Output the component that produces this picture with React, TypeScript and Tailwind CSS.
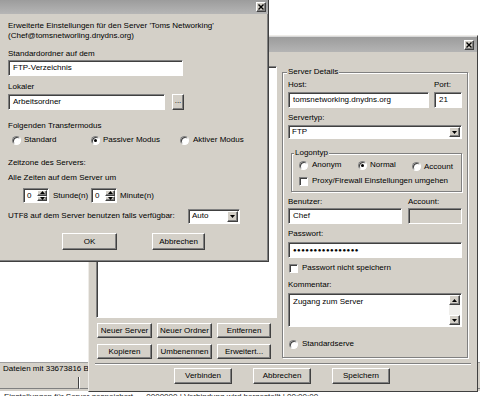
import React from 'react';

const raised =
  'bg-[#d4d0c8] border border-t-white border-l-white border-r-[#404040] border-b-[#404040] shadow-[inset_-1px_-1px_0_#808080]';
const sunken =
  'border border-t-[#808080] border-l-[#808080] border-r-white border-b-white shadow-[inset_1px_1px_0_#404040]';

function CloseBox() {
  return (
    <div className={`flex h-[10px] w-[10px] items-center justify-center ${raised}`}>
      <svg width="6" height="6" viewBox="0 0 6 6">
        <path d="M0.5 0.5 L5.5 5.5 M5.5 0.5 L0.5 5.5" stroke="#000" strokeWidth="1.4" />
      </svg>
    </div>
  );
}

function Button({ label, className = '' }: { label: string; className?: string }) {
  return <div className={`flex items-center justify-center whitespace-nowrap ${raised} ${className}`}>{label}</div>;
}

function Input({ value, className = '', disabled }: { value?: string; className?: string; disabled?: boolean }) {
  return (
    <div className={`flex items-center overflow-hidden whitespace-nowrap pl-[4px] ${sunken} ${disabled ? 'bg-[#d4d0c8]' : 'bg-white'} ${className}`}>
      {value}
    </div>
  );
}

function Radio({ checked }: { checked?: boolean }) {
  return (
    <span className={`flex h-[9px] w-[9px] shrink-0 items-center justify-center rounded-full bg-white ${sunken}`}>
      {checked && <span className="h-[3px] w-[3px] rounded-full bg-black" />}
    </span>
  );
}

function Check() {
  return <span className={`h-[9px] w-[9px] shrink-0 bg-white ${sunken}`} />;
}

function Arrow({ up }: { up?: boolean }) {
  return (
    <svg width="5" height="3" viewBox="0 0 5 3">
      <path d={up ? 'M2.5 0 L5 3 L0 3 Z' : 'M0 0 L5 0 L2.5 3 Z'} fill="#000" />
    </svg>
  );
}

function Select({ value, className = '' }: { value: string; className?: string }) {
  return (
    <div className={`flex items-stretch bg-white ${sunken} ${className}`}>
      <span className="flex flex-1 items-center pl-[3px]">{value}</span>
      <span className={`m-[1px] flex w-[11px] items-center justify-center ${raised}`}>
        <Arrow />
      </span>
    </div>
  );
}

function Spinner() {
  return (
    <div className={`flex h-[15px] w-[26px] items-stretch bg-white ${sunken}`}>
      <span className="flex flex-1 items-center pl-[3px]">0</span>
      <span className="m-[1px] flex w-[10px] flex-col">
        <span className={`flex flex-1 items-center justify-center ${raised}`}>
          <Arrow up />
        </span>
        <span className={`flex flex-1 items-center justify-center ${raised}`}>
          <Arrow />
        </span>
      </span>
    </div>
  );
}

function Backdrop() {
  return (
    <div className="absolute inset-0 flex flex-col">
      <div className="h-[362px] bg-white" />
      <div className="flex h-[13px] items-center border-t border-[#a0a0a0] bg-[#d4d0c8] pl-[3px] whitespace-nowrap">
        Dateien mit 33673816 Bytes
      </div>
      <div className="flex h-[16px] bg-[#d4d0c8] pt-[2px] pb-[2px]">
        <div className="w-[79px] border-r border-[#404040] border-b border-b-[#808080]" />
        <div className="flex-1 border-l border-white border-b border-b-[#808080]" />
      </div>
      <div className="flex-1 overflow-hidden bg-white pl-[4px] pt-[1px] whitespace-nowrap text-[#222]">
        Einstellungen für Server gespeichert&nbsp;&nbsp;&nbsp;&nbsp;&nbsp; 0000000 | Verbindung wird hergestellt | 00:00:00
      </div>
    </div>
  );
}

function SiteManager() {
  return (
    <div className="absolute left-[88px] top-[35px] flex h-[357px] w-[390px] flex-col border border-t-[#eeece8] border-l-[#eeece8] border-r-[#404040] border-b-[#404040] bg-[#d4d0c8]">
      <div className="flex h-[16px] shrink-0 items-center justify-end border-t border-[#d8d8d8] bg-gradient-to-b from-[#9c9c9c] to-[#b4b4b4] pr-[3px]">
        <CloseBox />
      </div>
      <div className="flex flex-1 flex-col">
        <div className="flex items-start pl-[7px]">
          <div className="mt-[14px] flex w-[181px] flex-col">
            <div className={`h-[252px] bg-white ${sunken}`} />
            <div className="mt-[5px] grid grid-cols-[55px_55px_54px] gap-x-[5px] gap-y-[6px] pl-[1px]">
              <Button label="Neuer Server" className="h-[15px]" />
              <Button label="Neuer Ordner" className="h-[15px]" />
              <Button label="Entfernen" className="h-[15px]" />
              <Button label="Kopieren" className="h-[15px]" />
              <Button label="Umbenennen" className="h-[15px]" />
              <Button label="Erweitert..." className="h-[15px]" />
            </div>
          </div>
          <div className="relative ml-[5px] mt-[20px] flex h-[286px] w-[186px] flex-col border border-[#808080] pl-[5px] pr-[5px] shadow-[1px_1px_0_white,inset_1px_1px_0_white]">
            <span className="absolute left-[4px] top-[-6px] bg-[#d4d0c8] px-[1px]">Server Details</span>
            <div className="mt-[7px] flex h-[10px] items-center">
              <span className="w-[146px]">Host:</span>
              <span>Port:</span>
            </div>
            <div className="mt-[2px] flex gap-[5px]">
              <Input value="tomsnetworking.dnydns.org" className="h-[16px] w-[141px]" />
              <Input value="21" className="h-[16px] flex-1" />
            </div>
            <div className="mt-[5px] flex h-[10px] items-center">Servertyp:</div>
            <Select value="FTP" className="mt-[2px] h-[14px]" />
            <div className="relative ml-[3px] mt-[14px] flex h-[39px] flex-col border border-[#808080] pl-[7px] shadow-[1px_1px_0_white,inset_1px_1px_0_white]">
              <span className="absolute left-[2px] top-[-6px] bg-[#d4d0c8] px-[1px]">Logontyp</span>
              <div className="mt-[6px] flex h-[10px] items-center">
                <span className="flex w-[59px] items-center gap-[4px]">
                  <Radio /> Anonym
                </span>
                <span className="flex w-[54px] items-center gap-[3px]">
                  <Radio checked /> Normal
                </span>
                <span className="flex items-center gap-[3px] pt-[3px]">
                  <Radio /> Account
                </span>
              </div>
              <div className="mt-[6px] flex h-[10px] items-center gap-[4px]">
                <Check /> Proxy/Firewall Einstellungen umgehen
              </div>
            </div>
            <div className="mt-[5px] flex h-[10px] items-center">
              <span className="w-[120px]">Benutzer:</span>
              <span className="-mt-[1px]">Account:</span>
            </div>
            <div className="mt-[1px] flex gap-[6px]">
              <Input value="Chef" className="h-[16px] w-[114px]" />
              <Input disabled className="h-[16px] flex-1" />
            </div>
            <div className="mt-[5px] flex h-[10px] items-center">Passwort:</div>
            <Input value="●●●●●●●●●●●●●●●●" className="mt-[3px] h-[16px] text-[6px] tracking-[0.5px]" />
            <div className="mt-[5px] flex h-[10px] items-center gap-[4px] pl-[1px]">
              <Check /> Passwort nicht speichern
            </div>
            <div className="mt-[7px] flex h-[10px] items-center">Kommentar:</div>
            <div className={`mt-[3px] flex h-[34px] items-stretch bg-white ${sunken}`}>
              <span className="flex-1 pl-[4px] pt-[3px]">Zugang zum Server</span>
              <span className="m-[1px] flex w-[11px] flex-col bg-[#f0efec]">
                <span className={`flex h-[10px] items-center justify-center ${raised}`}>
                  <Arrow up />
                </span>
                <span className="flex-1" />
                <span className={`flex h-[10px] items-center justify-center ${raised}`}>
                  <Arrow />
                </span>
              </span>
            </div>
            <div className="mt-[12px] flex h-[10px] items-center gap-[4px] pl-[1px]">
              <Radio /> Standardserve
            </div>
          </div>
        </div>
        <div className="mx-[6px] mt-[4px] h-[2px] border-t border-[#808080] border-b border-b-white" />
        <div className="mt-[3px] flex gap-[21px] pl-[85px]">
          <Button label="Verbinden" className="h-[16px] w-[58px]" />
          <Button label="Abbrechen" className="h-[16px] w-[58px]" />
          <Button label="Speichern" className="h-[16px] w-[58px]" />
        </div>
      </div>
    </div>
  );
}

function AdvancedDialog() {
  return (
    <div className="absolute left-0 top-0 flex h-[262px] w-[269px] flex-col border-r border-b border-r-[#404040] border-b-[#404040] bg-[#d4d0c8] shadow-[inset_-1px_-1px_0_#808080]">
      <div className="flex h-[14px] shrink-0 items-center justify-end bg-gradient-to-b from-[#9c9c9c] to-[#b6b6b6] pr-[2px]">
        <CloseBox />
      </div>
      <div className="flex flex-col pl-[8px]">
        <div className="mt-[7px] leading-[10px]">
          Erweiterte Einstellungen für den Server 'Toms Networking'
          <br />
          (Chef@tomsnetworling.dnydns.org)
        </div>
        <div className="mt-[8px] flex h-[10px] items-center">Standardordner auf dem</div>
        <Input value="FTP-Verzeichnis" className="mt-[1px] h-[16px] w-[175px]" />
        <div className="mt-[6px] flex h-[10px] items-center">Lokaler</div>
        <div className="mt-[2px] flex items-center">
          <Input value="Arbeitsordner" className="h-[16px] w-[157px]" />
          <Button label="..." className="ml-[7px] h-[16px] w-[12px] items-end pb-[3px]" />
        </div>
        <div className="mt-[11px] flex h-[10px] items-center">Folgenden Transfermodus</div>
        <div className="mt-[4px] flex h-[10px] items-center pl-[4px]">
          <span className="flex w-[79px] items-center gap-[3px]">
            <Radio /> Standard
          </span>
          <span className="flex w-[89px] items-center gap-[3px]">
            <Radio checked /> Passiver Modus
          </span>
          <span className="flex items-center gap-[4px]">
            <Radio /> Aktiver Modus
          </span>
        </div>
        <div className="mt-[13px] flex h-[10px] items-center">Zeitzone des Servers:</div>
        <div className="mt-[5px] flex h-[10px] items-center">Alle Zeiten auf dem Server um</div>
        <div className="mt-[5px] flex h-[15px] items-center pl-[15px]">
          <Spinner />
          <span className="ml-[4px] w-[38px]">Stunde(n)</span>
          <Spinner />
          <span className="ml-[3px]">Minute(n)</span>
        </div>
        <div className="mt-[5px] flex h-[16px] items-center">
          <span className="w-[180px]">UTF8 auf dem Server benutzen falls verfügbar:</span>
          <Select value="Auto" className="h-[15px] w-[52px]" />
        </div>
        <div className="mt-[9px] flex pl-[54px]">
          <Button label="OK" className="h-[17px] w-[55px]" />
          <Button label="Abbrechen" className="ml-[35px] h-[17px] w-[53px]" />
        </div>
      </div>
    </div>
  );
}

export default function App() {
  return (
    <div className="relative h-[396px] w-[480px] overflow-hidden bg-white font-['Liberation_Sans',Arial,sans-serif] text-[8px] leading-[10px] text-black">
      <Backdrop />
      <SiteManager />
      <AdvancedDialog />
    </div>
  );
}
